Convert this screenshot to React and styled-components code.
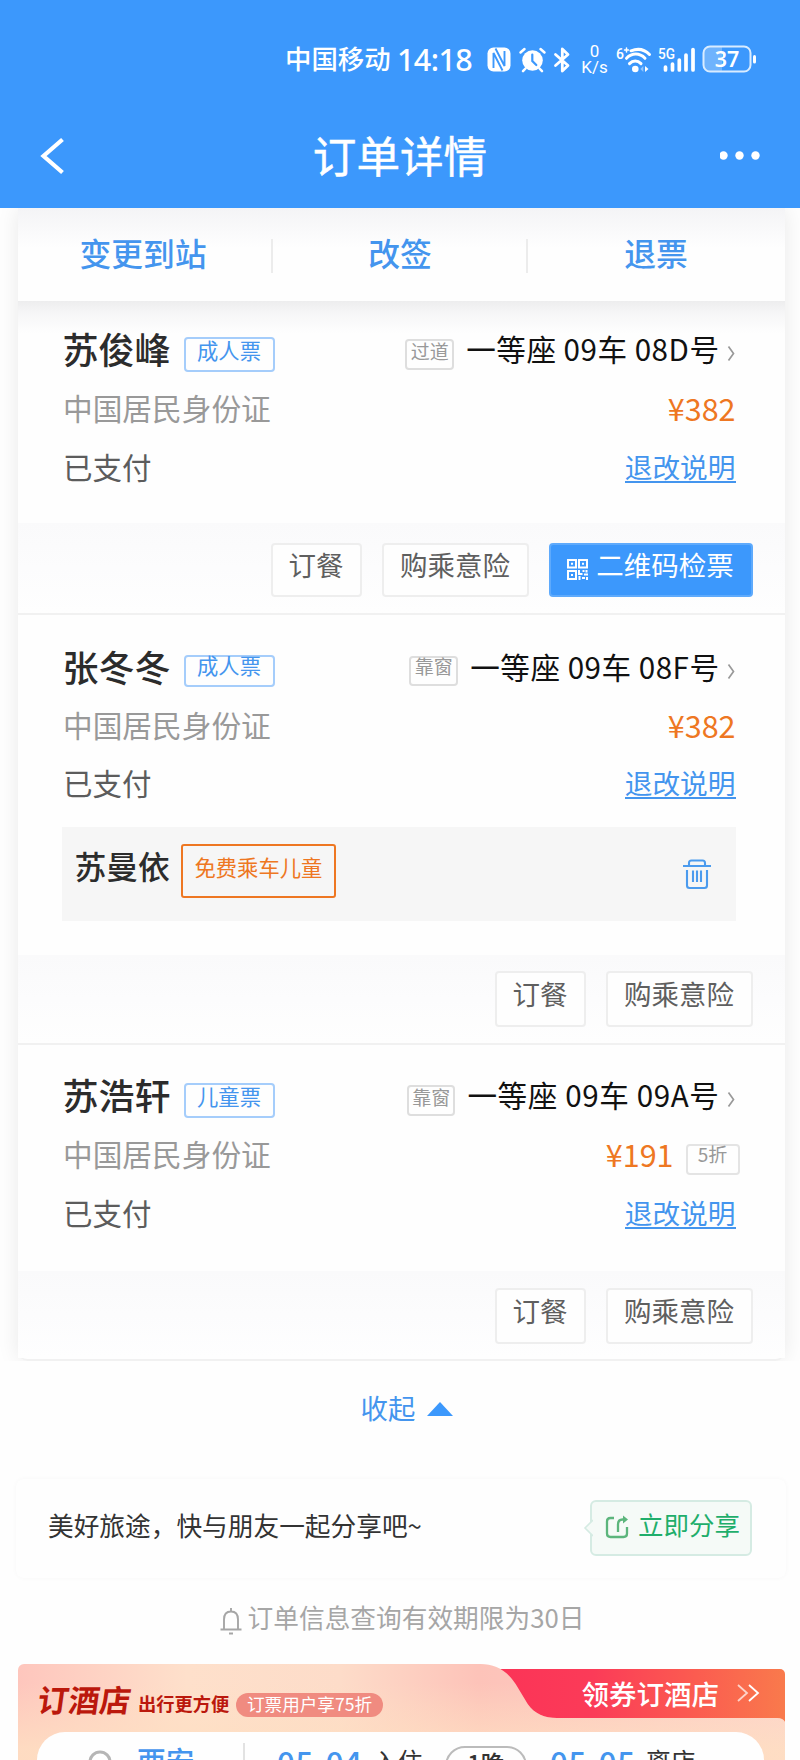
import React from 'react';
import styled, { createGlobalStyle } from 'styled-components';

const BLUE = '#3c98fc';
const ORANGE = '#ee7722';

const GlobalStyle = createGlobalStyle`
  * { box-sizing: border-box; }
  html, body { margin: 0; padding: 0; background: #fefefe; }
  body {
    font-family: "Noto Sans CJK SC", "Noto Sans", sans-serif;
    color: #333;
    overflow: hidden;
  }
`;

const Screen = styled.div`
  width: 800px;
  height: 1760px;
  overflow: hidden;
  display: flex;
  flex-direction: column;
  background: #fefefe;
`;

/* ---------- header ---------- */

const Header = styled.header`
  flex: none;
  height: 208px;
  background: ${BLUE};
  color: #fff;
  z-index: 1;
`;

const StatusBar = styled.div`
  height: 104px;
  padding: 39px 42px 0 285px;
  display: flex;
  align-items: flex-start;

  svg { flex: none; display: block; overflow: visible; }
`;

const Carrier = styled.span`
  width: 112px;
  font-size: 26.4px;
  font-weight: 500;
  line-height: 37px;
  white-space: nowrap;
`;

const Clock = styled.span`
  width: 89px;
  font-family: "Noto Sans", sans-serif;
  font-size: 30.5px;
  font-weight: 500;
  line-height: 41px;
  letter-spacing: -0.6px;
  white-space: nowrap;
`;

const IconSlot = styled.span`
  flex: none;
  margin: ${(p) => p.$top || 8}px 0 0 ${(p) => p.$left}px;
`;

const NetSpeed = styled.span`
  width: 27px;
  margin: 5px 7px 0 11px;
  display: flex;
  flex-direction: column;
  align-items: center;
  font-family: Roboto, sans-serif;
  font-size: 17px;
  line-height: 15.5px;
`;

const TitleBar = styled.div`
  height: 104px;
  padding: 0 40px;
  display: grid;
  grid-template-columns: 40px 1fr 40px;
  align-items: center;
`;

const Title = styled.h1`
  margin: 0 0 4px;
  font-size: 43.6px;
  line-height: 60px;
  font-weight: 400;
  -webkit-text-stroke: 0.5px #fff;
  text-align: center;
`;

/* ---------- order card ---------- */

const OrderCard = styled.main`
  flex: none;
  width: 767px;
  height: 1153px;
  margin-left: 17.5px;
  background: #fefefe;
  border-radius: 0 0 10px 10px;
  border-bottom: 2px solid #f1f1f1;
  box-shadow: 0 0 22px rgba(0, 0, 0, 0.085);
  clip-path: inset(0 -18px 0 -18px);
`;

const Tabs = styled.nav`
  height: 93px;
  display: grid;
  grid-template-columns: 255px 255px 257px;
  padding-top: 16px;
  background: linear-gradient(#f4f4f6, #fafafb 24px, #fefefe 40px);
`;

const Tab = styled.a`
  height: 60px;
  padding-right: ${(p) => p.$inset || 0}px;
  font-size: 31.8px;
  font-weight: 500;
  line-height: 56px;
  text-align: center;
  color: #4495ee;
  background: ${(p) => (p.$last ? 'none' : 'linear-gradient(#ececec, #ececec) right 15px / 2px 34px no-repeat')};
`;

const Passenger = styled.section`
  padding: ${(p) => p.$top}px 49px ${(p) => p.$bottom}px 45px;
  background: ${(p) => (p.$shaded ? 'linear-gradient(#ededee, #f6f6f7 12px, #fefefe 32px)' : 'none')};
`;

const Row = styled.div`
  height: ${(p) => p.$h}px;
  line-height: ${(p) => p.$h - 4}px;
  display: flex;
  align-items: flex-start;
  white-space: nowrap;
`;

const Name = styled.span`
  font-size: ${(p) => p.$size || 36}px;
  font-weight: 500;
  color: #2c2c2c;
`;

const TicketTag = styled.span`
  width: 91px;
  height: ${(p) => p.$h}px;
  margin: ${(p) => p.$top}px auto 0 13px;
  border: 2px solid #a5cdfb;
  border-radius: 4px;
  font-size: 21.3px;
  line-height: ${(p) => p.$line}px;
  text-align: center;
  color: #4495ee;
`;

const GrayTag = styled.span`
  width: ${(p) => p.$w}px;
  height: ${(p) => p.$h}px;
  margin: ${(p) => p.$top}px ${(p) => p.$right}px 0 0;
  border: 2px solid #dedede;
  border-radius: 4px;
  font-size: 19px;
  line-height: ${(p) => p.$line}px;
  text-align: center;
  color: #999;
`;

const DiscountTag = styled(GrayTag)`
  margin-left: 12px;
  border-color: #e4e4e4;
`;

const Seat = styled.span`
  font-size: 29.6px;
  line-height: 54px;
  color: #111;
  letter-spacing: ${(p) => p.$track}px;
`;

const Arrow = styled.svg`
  width: 8px;
  height: 17px;
  margin: 23px 1px 0 7px;
`;

const IdType = styled.span`
  margin-right: auto;
  padding-left: 0.5px;
  font-size: 29.7px;
  color: #999;
`;

const Price = styled.span`
  font-size: 30.5px;
  color: ${ORANGE};
`;

const Paid = styled.span`
  margin-right: auto;
  padding-left: 0.5px;
  font-size: 29.5px;
  line-height: 49px;
  color: #5c5c5c;
`;

const RuleLink = styled.a`
  height: 39px;
  margin-top: 2px;
  border-bottom: 2px solid #4495ee;
  font-size: 27.7px;
  line-height: 44px;
  color: #4495ee;
`;

const ChildBox = styled.div`
  height: 94px;
  margin: 15px 0 0 -1px;
  padding: 0 24px 0 13px;
  display: flex;
  align-items: flex-start;
  background: #f6f6f6;
  line-height: 77px;
  white-space: nowrap;
`;

const FreeTag = styled.span`
  width: 155px;
  height: 54px;
  margin: 17px auto 0 11px;
  border: 2px solid ${ORANGE};
  border-radius: 3px;
  font-size: 21.3px;
  line-height: 41px;
  text-align: center;
  color: ${ORANGE};
`;

const TrashIcon = styled.svg`
  width: 30px;
  height: 31px;
  margin-top: 32px;
`;

const Actions = styled.footer`
  height: ${(p) => p.$h}px;
  padding: ${(p) => p.$top}px 32px 0 0;
  display: flex;
  justify-content: flex-end;
  gap: 20px;
  background: linear-gradient(#fafafb, #fcfcfd 50%, #fefefe);
  border-bottom: ${(p) => (p.$last ? 'none' : '2px solid #f1f1f1')};
`;

const Button = styled.button`
  width: ${(p) => p.$w}px;
  height: ${(p) => p.$h || 56}px;
  padding: 0 0 ${(p) => p.$lift || 13}px;
  display: flex;
  align-items: center;
  justify-content: center;
  gap: 8px;
  border: 2px solid ${(p) => (p.$primary ? '#5eaafc' : '#eeeeee')};
  border-radius: 4px;
  background: ${(p) => (p.$primary ? BLUE : '#fefefe')};
  color: ${(p) => (p.$primary ? '#fff' : '#5f5f5f')};
  font: 400 27.5px/40px "Noto Sans CJK SC", sans-serif;
  white-space: nowrap;

  svg { flex: none; margin-top: 11px; }
`;

/* ---------- below the card ---------- */

const Collapse = styled.div`
  flex: none;
  height: 118px;
  padding: 0 0 27px 14px;
  display: flex;
  align-items: center;
  justify-content: center;
  gap: 12px;
  font-size: 27.4px;
  line-height: 40px;
  color: #4495ee;

  svg { margin-top: 4px; }
`;

const ShareCard = styled.section`
  flex: none;
  width: 770px;
  height: 99px;
  margin-left: 16px;
  padding: 0 34px 0 32px;
  display: flex;
  justify-content: space-between;
  align-items: flex-start;
  border-radius: 8px;
  box-shadow: 0 0 5px rgba(0, 0, 0, 0.03);
  background: #fefefe;
`;

const ShareText = styled.span`
  font-size: 25.7px;
  line-height: 91px;
  white-space: nowrap;
`;

const ShareBubble = styled.button`
  position: relative;
  width: 162px;
  height: 56px;
  margin-top: 21px;
  padding: 0 0 8px 13px;
  display: flex;
  align-items: center;
  gap: 8px;
  border: 2px solid #d5ebe3;
  border-radius: 6px;
  background: #f5faf7;
  color: #1fae6b;
  font: 400 25.5px/38px "Noto Sans CJK SC", sans-serif;
  white-space: nowrap;

  & > svg:not(:first-child) { margin-top: 6px; }
`;

const BubbleTip = styled.svg`
  position: absolute;
  left: -9px;
  top: 17px;
  width: 10px;
  height: 18px;
`;

const Notice = styled.div`
  flex: none;
  height: 86px;
  padding: 0 0 8px 4px;
  display: flex;
  align-items: center;
  justify-content: center;
  gap: 6px;
  font-size: 25.7px;
  line-height: 40px;
  color: #a6a6a6;

  svg { margin-top: 8px; }
`;

/* ---------- hotel banner ---------- */

const Hotel = styled.section`
  position: relative;
  flex: none;
  width: 767px;
  height: 96px;
  margin-left: 18px;
`;

const HotelShape = styled.svg`
  position: absolute;
  left: 0;
  top: 0;
`;

const HotelHead = styled.div`
  position: relative;
  height: 68px;
  padding-left: 20px;
  display: flex;
  align-items: flex-start;
  white-space: nowrap;
`;

const HotelLogo = styled.strong`
  width: 100px;
  margin-top: 13px;
  font-size: 31px;
  line-height: 44px;
  font-weight: 700;
  color: #bb180c;
  transform: skewX(-8deg);
`;

const HotelSlogan = styled.strong`
  width: 98px;
  margin-top: 25px;
  font-size: 18.3px;
  line-height: 28px;
  font-weight: 700;
  color: #bb180c;
`;

const HotelPill = styled.span`
  width: 147px;
  height: 24px;
  margin-top: 29px;
  border-radius: 12px;
  background: #f08b80;
  color: #fff;
  font-size: 17.6px;
  line-height: 21px;
  text-align: center;
`;

const Coupon = styled.span`
  margin: 9px 25px 0 auto;
  display: flex;
  align-items: center;
  gap: 18px;
  color: #fff;
  font-size: 27.5px;
  font-weight: 500;
  line-height: 40px;
`;

const HotelPanel = styled.div`
  position: relative;
  height: 28px;
  margin: 0 21px 0 19px;
  padding-left: 51px;
  overflow: hidden;
  display: flex;
  align-items: flex-start;
  border-radius: 28px 28px 0 0;
  background: #fefefe;
  white-space: nowrap;
  line-height: 56px;
`;

const PinIcon = styled.svg`
  flex: none;
  margin-top: 18px;
`;

const City = styled.span`
  width: 106px;
  margin-left: 25px;
  font-size: 28.8px;
  font-weight: 500;
  color: #4495ee;
`;

const PanelDivider = styled.i`
  width: 2px;
  height: 30px;
  margin-top: 11px;
  background: #e2e2e2;
`;

const DateText = styled.span`
  width: 96px;
  font-size: 31px;
  line-height: 57px;
  letter-spacing: 0.8px;
  color: #4495ee;
  font-weight: 500;
`;

const StartDate = styled(DateText)`
  margin-left: 32px;
`;

const DateLabel = styled.span`
  width: ${(p) => p.$w}px;
  font-size: 24.8px;
`;

const Nights = styled.span`
  width: 82px;
  height: 40px;
  margin: 14px 23px 0 0;
  border: 2px solid #bbb;
  border-radius: 20px;
  font-size: 24px;
  font-weight: 500;
  line-height: 29px;
  text-align: center;
`;

/* ---------- icons ---------- */

const NfcIcon = () => (
  <svg width="24" height="25" viewBox="0 0 24 25" fill="none">
    <rect x="0.500" y="0.500" width="23" height="24" rx="6" fill="#fff" />
    <path d="M6.500 21V6L15.500 23.500M17.500 4V19L8.500 1.500" stroke={BLUE} strokeWidth="1.900" />
  </svg>
);

const AlarmIcon = () => (
  <svg width="27" height="26" viewBox="0 0 27 26" fill="none" stroke="#fff" strokeLinecap="round">
    <circle cx="13.500" cy="13.500" r="10.300" fill="#fff" stroke="none" />
    <path d="M1.500 5.500 5.500 2M25.500 5.500 21.500 2M6.500 21.500l-2.500 2.700M20.500 21.500l2.500 2.700" strokeWidth="2.500" />
    <path d="M13.300 7.500v6.500l4 4" stroke={BLUE} strokeWidth="2.200" />
  </svg>
);

const BluetoothIcon = () => (
  <svg width="16" height="26" viewBox="0 0 16 26" fill="none" stroke="#fff" strokeWidth="2.800" strokeLinejoin="round" strokeLinecap="round">
    <path d="M1.500 7.500 14 18.500l-5.700 5.500V2L14 7.500 1.500 18.500" />
  </svg>
);

const WifiIcon = () => (
  <svg width="36" height="28" viewBox="0 0 36 28" fill="none" stroke="#fff" strokeWidth="3" strokeLinecap="round">
    <text x="0" y="12.500" fontSize="14" fontWeight="500" fill="#fff" stroke="none" fontFamily="Roboto" textLength="7">6</text>
    <path d="M8.500 4h4M10.500 2v4" strokeWidth="1.500" />
    <path d="M15 4.800c7-2.600 14-1 18.500 3.700M10.500 12.300c5.500-5.600 13-5.600 18.500 0M13.500 17.600c3.300-3.400 8.200-3.400 11.500 0" />
    <circle cx="19.300" cy="23" r="3.300" fill="#fff" stroke="none" />
    <path d="m29 20 3.500 3-3.500 3z" fill="#fff" stroke="none" />
    <path d="m27.300 20-3 3 3 3z" fill="#8ec4fd" stroke="none" />
  </svg>
);

const SignalIcon = () => (
  <svg width="40" height="28" viewBox="0 0 40 28" fill="none" stroke="#fff" strokeWidth="3.700" strokeLinecap="round">
    <text x="0" y="12.500" fontSize="15" fontWeight="500" fill="#fff" stroke="none" fontFamily="Roboto" textLength="17" lengthAdjust="spacingAndGlyphs">5G</text>
    <path d="M7.500 21v3M14.500 18v6M21.300 14v10M28 9v15M35 3.500V24" />
  </svg>
);

const BatteryIcon = () => (
  <svg width="56" height="28" viewBox="0 0 56 28">
    <path d="M8 2h12v24H8a6 6 0 0 1-6-6V8a6 6 0 0 1 6-6z" fill="#6fb3fd" />
    <rect x="1.500" y="1.500" width="47" height="25" rx="6.500" fill="none" stroke="#d9ecff" strokeWidth="2" />
    <path d="M52.500 11.500v5.500" stroke="#fff" strokeWidth="3" strokeLinecap="round" />
    <text x="25" y="21.800" fontSize="21.500" fontWeight="600" fill="#fff" textAnchor="middle" fontFamily="Noto Sans">37</text>
  </svg>
);

const SeatArrow = () => (
  <Arrow viewBox="0 0 8 17" fill="none" stroke="#999" strokeWidth="1.700">
    <path d="M1.500 1.500 6.500 8.500l-5 7" />
  </Arrow>
);

const QrIcon = () => (
  <svg width="21" height="21" viewBox="0 0 21 21" fill="none" stroke="#fff" strokeWidth="2">
    <rect x="1" y="1" width="8" height="7.500" />
    <rect x="12" y="1" width="8" height="7.500" />
    <rect x="1" y="12" width="8" height="8" />
    <path d="M4 4.800h2M15 4.800h2M4 16h2M12 11v4h3.500M19.500 11v2.500M16.500 11v2M17 15.500h4M12.500 17v4M15 19h3M20 18v3" />
  </svg>
);

const Trash = () => (
  <TrashIcon viewBox="0 0 30 31" fill="none" stroke="#4b9bee" strokeWidth="2.100">
    <path d="M1 7h28M7 7V4q0-2.500 2.500-2.500h11q2.500 0 2.500 2.500v3M5 11v15.500q0 2.500 2.500 2.500h15q2.500 0 2.500-2.500V11M11 11.500V23M15 11.500V23M19 11.500V23" />
  </TrashIcon>
);

const ShareIcon = () => (
  <svg width="25" height="26" viewBox="0 0 25 26" fill="none" stroke="#5cb57c" strokeWidth="2.300">
    <path d="M9 4H5.500Q2 4 2 7.500v12Q2 23 5.500 23h13q3.500 0 3.500-3.500V13M13 18v-7.500q0-5 4.500-5h2" />
    <path d="m18 1.500 5 4-5 4z" fill="#5cb57c" stroke="none" />
  </svg>
);

const BellIcon = () => (
  <svg width="22" height="27" viewBox="0 0 22 27" fill="none" stroke="#a6a6a6" strokeWidth="1.900">
    <path d="M11 0v3.500M4 21V11.500q0-8 7-8t7 8V21M.5 21.500h21M9 25.500h4" />
  </svg>
);

/* ---------- data ---------- */

const passengers = [
  {
    name: '苏俊峰', ticket: '成人票', ticketBox: [15, 35, 22], place: '过道', placeBox: [49, 31, 17, 12, 19],
    seat: '一等座 09车 08D号', track: 0.5, price: '¥382', top: 21, idRow: 64, bottom: 27,
    foot: [92, 20], buttonH: 54, qr: true,
  },
  {
    name: '张冬冬', ticket: '成人票', ticketBox: [15, 32, 16], place: '靠窗', placeBox: [49, 30, 16, 12, 15],
    seat: '一等座 09车 08F号', track: 0.5, price: '¥382', top: 25, idRow: 62, bottom: 34,
    foot: [90, 16], child: '苏曼依',
  },
  {
    name: '苏浩轩', ticket: '儿童票', ticketBox: [15, 35, 22], place: '靠窗', placeBox: [48, 31, 17, 12, 19],
    seat: '一等座 09车 09A号', track: 0.6, price: '¥191', discount: '5折', top: 23, idRow: 64, bottom: 29,
    foot: [87, 17],
  },
];

function PassengerBlock({ p, first, last }) {
  const [tTop, tH, tLine] = p.ticketBox;
  const [w, h, top, right, line] = p.placeBox;
  return (
    <>
      <Passenger $top={p.top} $bottom={p.bottom} $shaded={first}>
        <Row $h={56}>
          <Name>{p.name}</Name>
          <TicketTag $top={tTop} $h={tH} $line={tLine}>{p.ticket}</TicketTag>
          <GrayTag $w={w} $h={h} $top={top} $right={right} $line={line}>{p.place}</GrayTag>
          <Seat $track={p.track}>{p.seat}</Seat>
          <SeatArrow />
        </Row>
        <Row $h={p.idRow}>
          <IdType>中国居民身份证</IdType>
          <Price>{p.price}</Price>
          {p.discount && (
            <DiscountTag $w={54} $h={31} $top={20} $right={-4} $line={16}>{p.discount}</DiscountTag>
          )}
        </Row>
        <Row $h={54}>
          <Paid>已支付</Paid>
          <RuleLink>退改说明</RuleLink>
        </Row>
        {p.child && (
          <ChildBox>
            <Name $size={31.8}>{p.child}</Name>
            <FreeTag>免费乘车儿童</FreeTag>
            <Trash />
          </ChildBox>
        )}
      </Passenger>
      <Actions $h={p.foot[0]} $top={p.foot[1]} $last={last}>
        <Button $w={91} $h={p.buttonH}>订餐</Button>
        <Button $w={147} $h={p.buttonH}>购乘意险</Button>
        {p.qr && (
          <Button $w={204} $h={p.buttonH} $primary>
            <QrIcon />
            二维码检票
          </Button>
        )}
      </Actions>
    </>
  );
}

export default function App() {
  return (
    <Screen>
      <GlobalStyle />
      <Header>
        <StatusBar>
          <Carrier>中国移动</Carrier>
          <Clock>14:18</Clock>
          <IconSlot $left={1}><NfcIcon /></IconSlot>
          <IconSlot $left={8}><AlarmIcon /></IconSlot>
          <IconSlot $left={8}><BluetoothIcon /></IconSlot>
          <NetSpeed><span>0</span><span>K/s</span></NetSpeed>
          <IconSlot $left={1} $top={7}><WifiIcon /></IconSlot>
          <IconSlot $left={6} $top={7}><SignalIcon /></IconSlot>
          <IconSlot $left={4} $top={6}><BatteryIcon /></IconSlot>
        </StatusBar>
        <TitleBar>
          <svg width="24" height="38" viewBox="0 0 24 38" fill="none" stroke="#fff" strokeWidth="4.200">
            <path d="M22.500 2.500 3.500 19l19 16.500" />
          </svg>
          <Title>订单详情</Title>
          <svg width="44" height="12" viewBox="0 0 44 12" fill="#fff">
            <circle cx="3.500" cy="5.500" r="4.200" />
            <circle cx="19.500" cy="5.500" r="4.200" />
            <circle cx="35.500" cy="5.500" r="4.200" />
          </svg>
        </TitleBar>
      </Header>

      <OrderCard>
        <Tabs>
          <Tab $inset={4}>变更到站</Tab>
          <Tab>改签</Tab>
          <Tab $last>退票</Tab>
        </Tabs>
        {passengers.map((p, i) => (
          <PassengerBlock key={p.name} p={p} first={i === 0} last={i === passengers.length - 1} />
        ))}
      </OrderCard>

      <Collapse>
        收起
        <svg width="26" height="14" viewBox="0 0 26 14"><path d="M13 0 26 14H0z" fill={BLUE} /></svg>
      </Collapse>

      <ShareCard>
        <ShareText>美好旅途，快与朋友一起分享吧~</ShareText>
        <ShareBubble>
          <BubbleTip viewBox="0 0 10 18" fill="#f5faf7" stroke="#d5ebe3" strokeWidth="1.600">
            <path d="M10 1 2 9l8 8" />
          </BubbleTip>
          <ShareIcon />
          立即分享
        </ShareBubble>
      </ShareCard>

      <Notice>
        <BellIcon />
        订单信息查询有效期限为30日
      </Notice>

      <Hotel>
        <HotelShape width="767" height="96" viewBox="0 0 766 96" preserveAspectRatio="none">
          <defs>
            <linearGradient id="peach" x1="0" y1="0" x2="1" y2="0">
              <stop offset="0" stopColor="#fec6bd" />
              <stop offset="0.220" stopColor="#fee0cb" />
              <stop offset="0.420" stopColor="#fddcc9" />
              <stop offset="0.600" stopColor="#fdc3b9" />
              <stop offset="1" stopColor="#fdd2cc" />
            </linearGradient>
            <linearGradient id="fade" x1="0" y1="0" x2="0" y2="1">
              <stop offset="0.200" stopColor="#fedfc2" stopOpacity="0" />
              <stop offset="0.900" stopColor="#fedfc2" stopOpacity="0.850" />
            </linearGradient>
            <linearGradient id="coupon" x1="0" y1="0" x2="1" y2="0">
              <stop offset="0" stopColor="#fb3357" />
              <stop offset="0.350" stopColor="#fb3b58" />
              <stop offset="0.700" stopColor="#fb5c50" />
              <stop offset="1" stopColor="#f97a4c" />
            </linearGradient>
          </defs>
          <path d="M470 5H761a5 5 0 0 1 5 5V62H470z" fill="url(#coupon)" />
          <path
            d="M0 6a6 6 0 0 1 6-6H462C476 0 488 6 497 20L509 40C516 50 526 54 538 54H758Q764 54 766 58V96H0z"
            fill="url(#peach)"
          />
          <path
            d="M0 6a6 6 0 0 1 6-6H462C476 0 488 6 497 20L509 40C516 50 526 54 538 54H758Q764 54 766 58V96H0z"
            fill="url(#fade)"
          />
        </HotelShape>
        <HotelHead>
          <HotelLogo>订酒店</HotelLogo>
          <HotelSlogan>出行更方便</HotelSlogan>
          <HotelPill>订票用户享75折</HotelPill>
          <Coupon>
            领券订酒店
            <svg width="23" height="18" viewBox="0 0 23 18" fill="none" stroke="#fff" strokeWidth="1.800">
              <path d="m1 1 9 8-9 8" opacity="0.700" />
              <path d="m12 1 9 8-9 8" />
            </svg>
          </Coupon>
        </HotelHead>
        <HotelPanel>
          <PinIcon width="24" height="24" viewBox="0 0 24 24" fill="none" stroke="#b5b5b5" strokeWidth="3">
            <circle cx="12" cy="12" r="10" />
          </PinIcon>
          <City>西安</City>
          <PanelDivider />
          <StartDate>05-04</StartDate>
          <DateLabel $w={72}>入住</DateLabel>
          <Nights>1晚</Nights>
          <DateText>05-05</DateText>
          <DateLabel $w={50}>离店</DateLabel>
        </HotelPanel>
      </Hotel>
    </Screen>
  );
}
